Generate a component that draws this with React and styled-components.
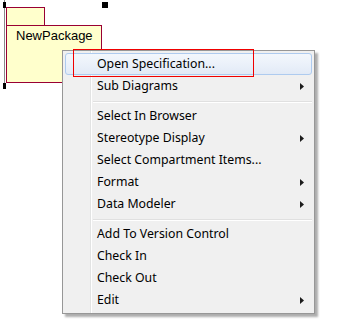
import React from "react";
import styled, { createGlobalStyle } from "styled-components";

const GlobalStyle = createGlobalStyle`
  html, body { margin: 0; padding: 0; background: #ffffff; }
  body { font-family: "Noto Sans", "Liberation Sans", sans-serif; }
  * { box-sizing: border-box; }
`;

const Canvas = styled.div`
  position: relative;
  width: 344px;
  height: 320px;
  overflow: hidden;
  background: #ffffff;
`;

const SelectionLine = styled.div`
  position: absolute;
  left: 4px;
  top: 0;
  width: 1px;
  height: 89px;
  background: #8a8a8a;
`;

const Handle = styled.div`
  position: absolute;
  left: ${(p) => p.$x}px;
  top: ${(p) => p.$y}px;
  width: ${(p) => p.$w}px;
  height: ${(p) => p.$h}px;
  background: #000000;
`;

const PackageNode = styled.div`
  position: absolute;
  left: 6px;
  top: 7px;
  display: flex;
  flex-direction: column;
  align-items: flex-start;
`;

const PackageTab = styled.div`
  width: 39px;
  height: 19px;
  background: #ffffcc;
  border: 1px solid #990033;
`;

const PackageBody = styled.div`
  width: 96px;
  height: 58px;
  margin-top: -1px;
  background: #ffffcc;
  border: 1px solid #990033;
  padding: 2px 0 0 9px;
  font-family: "Liberation Sans", Arial, sans-serif;
  font-size: 13px;
  line-height: 15px;
  color: #000000;
`;

const ContextMenu = styled.div`
  position: absolute;
  left: 62px;
  top: 50px;
  width: 253px;
  display: flex;
  flex-direction: column;
  padding: 2px;
  border: 1px solid #979797;
  background: linear-gradient(
    to right,
    #f0f0f0 27px,
    #e2e3e3 27px,
    #e2e3e3 28px,
    #ffffff 28px,
    #ffffff 29px,
    #f0f0f0 29px
  );
  box-shadow: 3px 3px 2px rgba(0, 0, 0, 0.32);
  font-family: "Noto Sans", "Liberation Sans", sans-serif;
  font-size: 12.3px;
  color: #000000;
`;

const MenuItem = styled.div`
  height: 22px;
  display: flex;
  align-items: center;
  padding: 0 7px 0 31px;
  border: 1px solid ${(p) => (p.$active ? "#aecbef" : "transparent")};
  border-radius: 3px;
  background: ${(p) =>
    p.$active
      ? "linear-gradient(to bottom, #f3f7fc 0%, #ebf1fa 50%, #e2eaf6 100%)"
      : "transparent"};
  white-space: nowrap;
  line-height: 16px;
`;

const Label = styled.span`
  flex: 1;
`;

const SubArrow = styled.svg`
  width: 4px;
  height: 7px;
  flex: none;
  display: block;
`;

const Separator = styled.div`
  height: 8px;
  margin-left: 28px;
  padding-top: 4px;
  &::before {
    content: "";
    display: block;
    height: 1px;
    background: #e0e0e0;
    border-bottom: 1px solid #ffffff;
    box-sizing: content-box;
  }
`;

const Annotation = styled.div`
  position: absolute;
  left: 73px;
  top: 49px;
  width: 181px;
  height: 28px;
  border: 1.5px solid #f00000;
  pointer-events: none;
`;

const menu = [
  { label: "Open Specification...", active: true },
  { label: "Sub Diagrams", sub: true },
  { sep: true },
  { label: "Select In Browser" },
  { label: "Stereotype Display", sub: true },
  { label: "Select Compartment Items..." },
  { label: "Format", sub: true },
  { label: "Data Modeler", sub: true },
  { sep: true },
  { label: "Add To Version Control" },
  { label: "Check In" },
  { label: "Check Out" },
  { label: "Edit", sub: true },
];

export default function App() {
  return (
    <>
      <GlobalStyle />
      <Canvas>
        <SelectionLine />
        <Handle $x={3} $y={2} $w={3} $h={6} />
        <Handle $x={3} $y={83} $w={3} $h={6} />
        <Handle $x={102} $y={2} $w={6} $h={6} />
        <PackageNode>
          <PackageTab />
          <PackageBody>NewPackage</PackageBody>
        </PackageNode>
        <ContextMenu>
          {menu.map((m, i) =>
            m.sep ? (
              <Separator key={i} />
            ) : (
              <MenuItem key={i} $active={m.active}>
                <Label>{m.label}</Label>
                {m.sub && (
                  <SubArrow viewBox="0 0 4 7">
                    <path d="M0 0 L4 3.5 L0 7 Z" fill="#1c1c1c" />
                  </SubArrow>
                )}
              </MenuItem>
            )
          )}
        </ContextMenu>
        <Annotation />
      </Canvas>
    </>
  );
}
